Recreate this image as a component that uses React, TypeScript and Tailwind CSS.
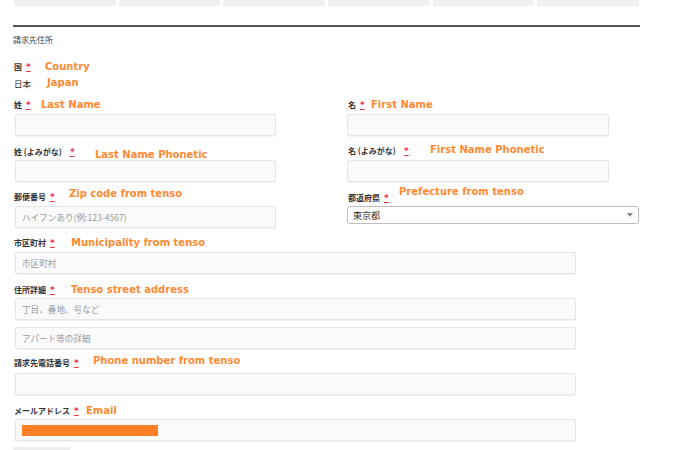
import type { ReactNode } from 'react';

const jp = { fontFamily: '"Noto Sans CJK JP", "Noto Sans", sans-serif' };
const note = { fontFamily: '"DejaVu Sans", Verdana, sans-serif' };

function Req({ gap = 'ml-[4px]' }: { gap?: string }) {
  return (
    <span className={`${gap} text-[9px] font-bold leading-none text-[#e0393e] underline decoration-[#e0393e]`} style={note}>
      *
    </span>
  );
}

function Note({ left, dy = 0, children }: { left: number; dy?: number; children: ReactNode }) {
  return (
    <span
      className="absolute top-1/2 whitespace-nowrap text-[10px] font-bold leading-none text-[#ff8a33]"
      style={{ ...note, left, transform: `translateY(calc(-50% + ${dy}px))` }}
    >
      {children}
    </span>
  );
}

function Label({ text, gap, children, className = '' }: { text: ReactNode; gap?: string; children?: ReactNode; className?: string }) {
  return (
    <div className={`relative flex h-[16px] items-center ${className}`}>
      <span className="flex items-center pl-[1px] text-[8px] font-semibold leading-none text-[#333]" style={jp}>
        {text}
        <Req gap={gap} />
      </span>
      {children}
    </div>
  );
}

function Input({ w, placeholder, className = '', children }: { w: string; placeholder?: string; className?: string; children?: ReactNode }) {
  return (
    <div
      className={`relative ml-[2px] flex h-[22px] items-center rounded-[2px] border border-[#e6e6e6] bg-[#fafafa] px-[6px] shadow-[0_1px_1px_rgba(0,0,0,0.06)] ${w} ${className}`}
    >
      {placeholder && (
        <span className="text-[8.6px] leading-none text-[#9a9a9a]" style={jp}>
          {placeholder}
        </span>
      )}
      {children}
    </div>
  );
}

export default function App() {
  return (
    <div className="h-[450px] w-[680px] overflow-hidden bg-white">
      {/* tab strip */}
      <div className="ml-[14px] flex h-[6px] w-[625px] gap-[3px]">
        {[0, 1, 2, 3, 4, 5].map((i) => (
          <div key={i} className="flex-1 bg-[#f0f0f0]" />
        ))}
      </div>

      <div className="pl-[13px]">
        <div className="mt-[19px] h-[2px] w-[627px] bg-[#555]" />
        <div className="mt-[6px] flex h-[14px] items-center text-[8px] text-[#444]" style={jp}>
          請求先住所
        </div>

        {/* country */}
        <Label text="国" className="mt-[12px]">
          <Note left={32}>Country</Note>
        </Label>
        <div className="relative flex h-[16px] items-center">
          <span className="pl-[1px] text-[8.5px] leading-none text-[#222]" style={jp}>
            日本
          </span>
          <Note left={34}>Japan</Note>
        </div>

        {/* name rows */}
        <div className="mt-[6px] grid grid-cols-[334px_293px]">
          <div>
            <Label text="姓">
              <Note left={28}>Last Name</Note>
            </Label>
            <Input w="w-[261px]" className="mt-[1px]" />
            <Label text="姓 (よみがな)" gap="ml-[8px]" className="mt-[8px]">
              <Note left={82} dy={3}>Last Name Phonetic</Note>
            </Label>
            <Input w="w-[261px]" />
            <Label text="郵便番号" className="mt-[7px]">
              <Note left={56} dy={-3}>Zip code from tenso</Note>
            </Label>
            <Input w="w-[261px]" className="mt-[1px]" placeholder="ハイフンあり(例:123-4567)" />
          </div>
          <div>
            <Label text="名">
              <Note left={24}>First Name</Note>
            </Label>
            <Input w="w-[262px]" className="!ml-0 mt-[1px]" />
            <Label text="名 (よみがな)" gap="ml-[8px]" className="mt-[7px]">
              <Note left={83} dy={-1}>First Name Phonetic</Note>
            </Label>
            <Input w="w-[262px]" className="!ml-0 mt-[1px]" />
            <Label text="都道府県" className="mt-[8px]">
              <Note left={52} dy={-6}>Prefecture from tenso</Note>
            </Label>
            <div className="flex h-[18px] w-[292px] items-center justify-between rounded-[3px] border border-[#bdbdbd] bg-white pl-[5px] pr-[5px]">
              <span className="text-[9px] leading-none text-[#333]" style={jp}>
                東京都
              </span>
              <svg width="6" height="4" viewBox="0 0 6 4">
                <path d="M0 0h6L3 4z" fill="#888" />
              </svg>
            </div>
          </div>
        </div>

        <Label text="市区町村" className="mt-[7px]">
          <Note left={58}>Municipality from tenso</Note>
        </Label>
        <Input w="w-[561px]" className="mt-[1px]" placeholder="市区町村" />

        <Label text="住所詳細" className="mt-[8px]">
          <Note left={58}>Tenso street address</Note>
        </Label>
        <Input w="w-[561px]" placeholder="丁目、番地、号など" />
        <Input w="w-[561px]" className="mt-[7px]" placeholder="アパート等の詳細" />

        <Label text="請求先電話番号" className="mt-[6px]">
          <Note left={80} dy={-2}>Phone number from tenso</Note>
        </Label>
        <Input w="w-[561px]" className="mt-[2px]" />

        <Label text="メールアドレス" className="mt-[8px]">
          <Note left={73}>Email</Note>
        </Label>
        <Input w="w-[561px]">
          <div className="h-[11px] w-[136px] bg-[#ff7f27]" />
        </Input>

        <div className="mt-[6px] h-[8px] w-[57px] bg-[#eeeeee]" />
      </div>
    </div>
  );
}
